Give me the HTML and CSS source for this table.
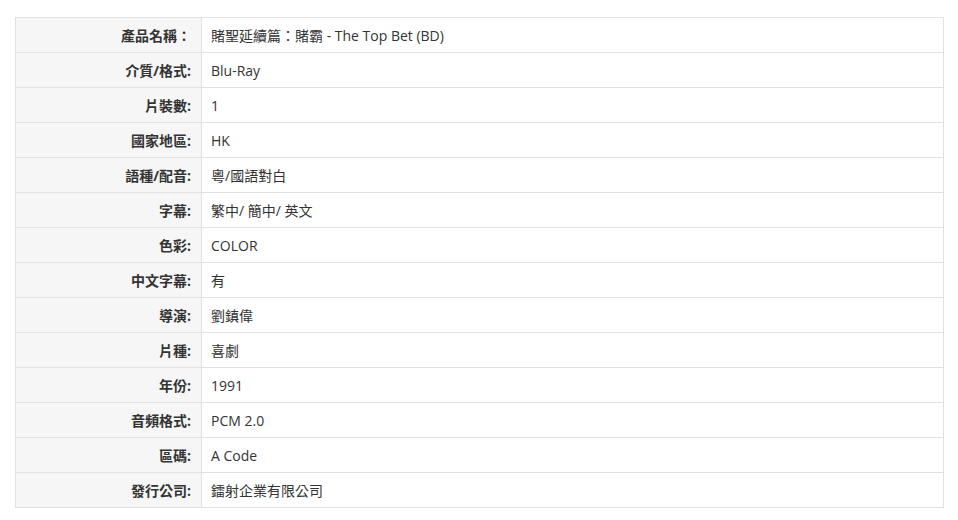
FILE: index.html
```html
<!DOCTYPE html>
<html lang="zh-Hant">
<head>
<meta charset="utf-8">
<link rel="stylesheet" href="styles.css">
</head>
<body>
<div class="wrap">
<table class="spec">
<tbody>
<tr><th>產品名稱：</th><td>賭聖延續篇：賭霸 - The Top Bet (BD)</td></tr>
<tr><th>介質/格式:</th><td>Blu-Ray</td></tr>
<tr><th>片裝數:</th><td>1</td></tr>
<tr><th>國家地區:</th><td>HK</td></tr>
<tr><th>語種/配音:</th><td>粵/國語對白</td></tr>
<tr><th>字幕:</th><td>繁中/ 簡中/ 英文</td></tr>
<tr><th>色彩:</th><td>COLOR</td></tr>
<tr><th>中文字幕:</th><td>有</td></tr>
<tr><th>導演:</th><td>劉鎮偉</td></tr>
<tr><th>片種:</th><td>喜劇</td></tr>
<tr><th>年份:</th><td>1991</td></tr>
<tr><th>音頻格式:</th><td>PCM 2.0</td></tr>
<tr><th>區碼:</th><td>A Code</td></tr>
<tr><th>發行公司:</th><td>鐳射企業有限公司</td></tr>
</tbody>
</table>
</div>
</body>
</html>
```
FILE: styles.css
```css
html, body {
  margin: 0;
  padding: 0;
  background: #fff;
}
.wrap {
  padding: 17px 15px 0 15px;
}
.spec {
  width: 929px;
  border-collapse: collapse;
  font-family: "Open Sans", "Noto Sans CJK TC", sans-serif;
  font-size: 14px;
  color: #333;
}
.spec th, .spec td {
  border: 1px solid #e2e2e2;
  height: 35px;
  padding: 0 10px;
  vertical-align: middle;
  box-sizing: border-box;
}
.spec th {
  width: 186px;
  background: #f6f6f6;
  text-align: right;
  font-weight: bold;
  white-space: nowrap;
}
.spec td {
  padding-left: 9px;
  text-align: left;
  font-weight: normal;
}
```
